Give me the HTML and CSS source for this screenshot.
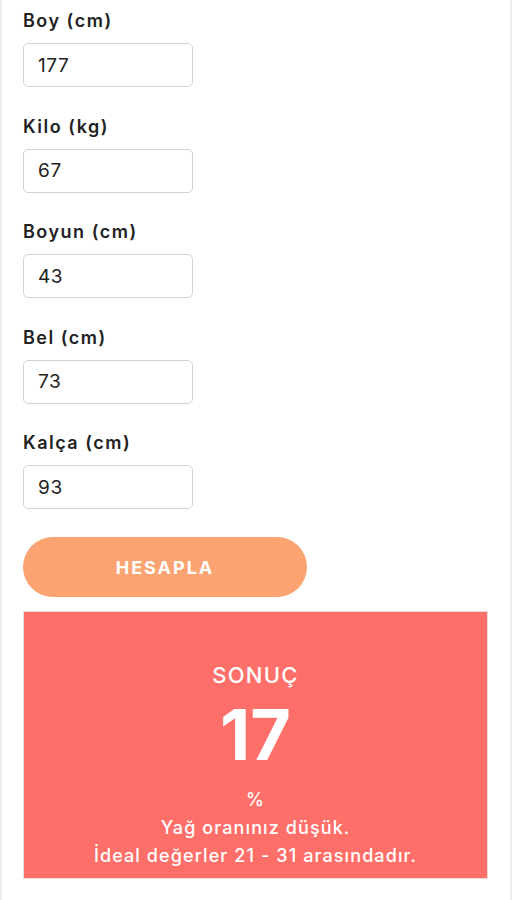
FILE: index.html
```html
<!DOCTYPE html>
<html lang="tr">
<head>
<meta charset="utf-8">
<link rel="stylesheet" href="styles.css">
</head>
<body>
<div class="page">
  <form class="calc">
    <div class="field">
      <label class="label">Boy (cm)</label>
      <input class="input" type="text" value="177">
    </div>
    <div class="field">
      <label class="label">Kilo (kg)</label>
      <input class="input" type="text" value="67">
    </div>
    <div class="field">
      <label class="label">Boyun (cm)</label>
      <input class="input" type="text" value="43">
    </div>
    <div class="field">
      <label class="label">Bel (cm)</label>
      <input class="input" type="text" value="73">
    </div>
    <div class="field">
      <label class="label">Kalça (cm)</label>
      <input class="input" type="text" value="93">
    </div>
    <button class="btn" type="button">HESAPLA</button>
  </form>
  <div class="result">
    <div class="result-title">SONUÇ</div>
    <div class="result-value">17</div>
    <div class="result-line">%</div>
    <div class="result-line">Yağ oranınız düşük.</div>
    <div class="result-line">İdeal değerler 21 - 31 arasındadır.</div>
  </div>
</div>
</body>
</html>
```

FILE: styles.css
```css
html, body {
  margin: 0;
  padding: 0;
}
body {
  background: #efeee8;
  font-family: Inter, "Open Sans", "Noto Sans", sans-serif;
  color: #222;
}
.page {
  margin: 0 2px;
  background: #ffffff;
  min-height: 900px;
  padding: 10px 21px 0;
  box-sizing: border-box;
}
.calc {
  display: flex;
  flex-direction: column;
}
.field {
  display: flex;
  flex-direction: column;
  align-items: flex-start;
  margin-bottom: 28.5px;
}
.label {
  font-size: 18px;
  line-height: 22px;
  font-weight: 600;
  letter-spacing: 1.5px;
  color: #222;
  margin-bottom: 11px;
}
.input {
  width: 170px;
  height: 44px;
  box-sizing: border-box;
  border: 1px solid #d3d3d3;
  border-radius: 5px;
  padding: 0 14px;
  font-family: inherit;
  font-size: 19px;
  letter-spacing: 0.6px;
  color: #222;
  background: #fff;
  outline: none;
}
.btn {
  margin-top: -0.5px;
  width: 284px;
  height: 60px;
  border: none;
  border-radius: 30px;
  background: #fca372;
  color: #fff;
  font-family: inherit;
  font-size: 18px;
  font-weight: 700;
  letter-spacing: 2px;
  padding: 0;
}
.result {
  margin-top: 14px;
  width: 465px;
  box-sizing: border-box;
  background: #ff6f69;
  border: 1px solid #eadcd6;
  color: #fff;
  text-align: center;
  padding: 49px 0 8px;
  height: 268px;
}
.result-title {
  font-size: 22px;
  line-height: 28px;
  font-weight: 500;
  letter-spacing: 1.3px;
}
.result-value {
  margin-top: 7.5px;
  font-size: 70px;
  line-height: 76px;
  font-weight: 700;
}
.result-value + .result-line {
  margin-top: 13.5px;
}
.result-line {
  font-size: 18px;
  line-height: 28px;
  font-weight: 500;
  letter-spacing: 1.1px;
}
```
